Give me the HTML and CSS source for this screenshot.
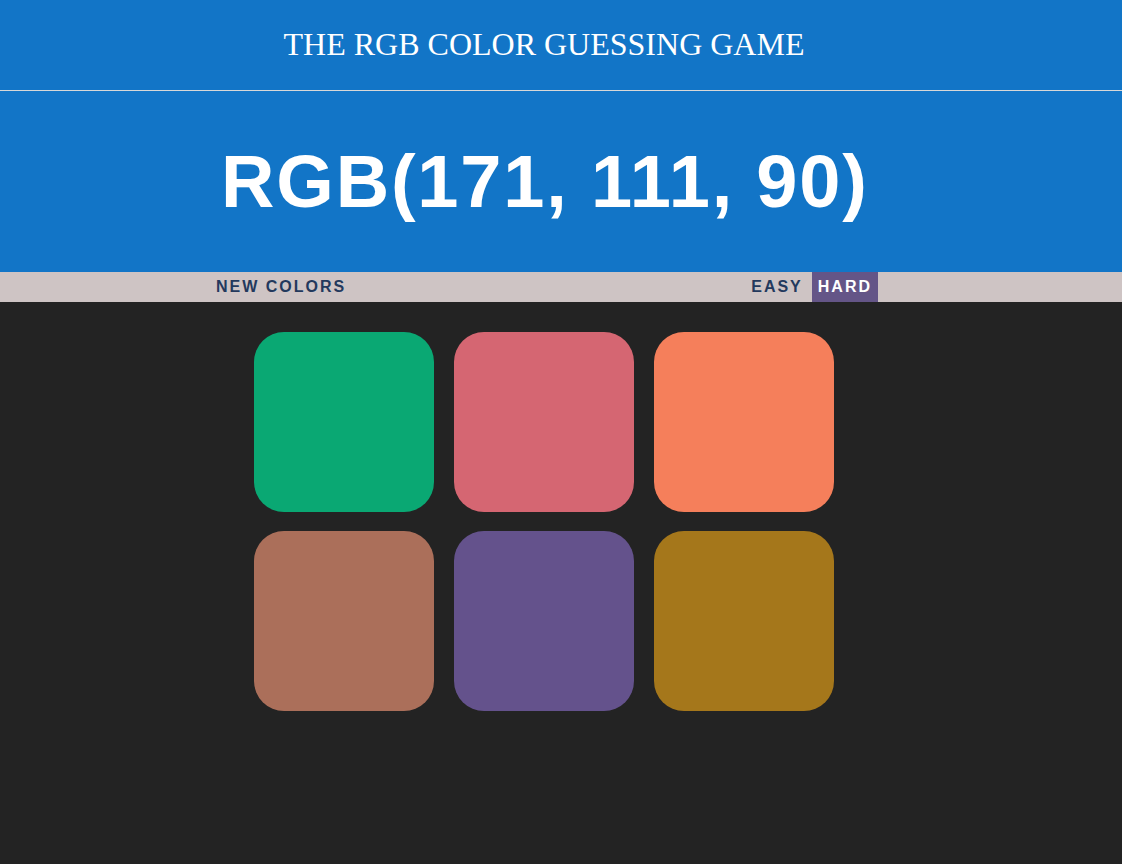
FILE: index.html
```html
<!DOCTYPE html>
<html lang="en">
<head>
<meta charset="utf-8">
<title>The RGB Color Guessing Game</title>
<link rel="stylesheet" href="styles.css">
</head>
<body>
  <header class="header">
    <div class="title-row">
      <h1 class="title">THE RGB COLOR GUESSING GAME</h1>
    </div>
    <div class="rgb-row">
      <h2 class="rgb">RGB(171, 111, 90)</h2>
    </div>
  </header>
  <nav class="stripe">
    <div class="stripe-inner">
      <button class="btn">NEW COLORS</button>
      <span class="spacer"></span>
      <button class="btn">EASY</button>
      <button class="btn selected">HARD</button>
    </div>
  </nav>
  <main class="board">
    <div class="grid">
      <div class="square sq1"></div>
      <div class="square sq2"></div>
      <div class="square sq3"></div>
      <div class="square sq4"></div>
      <div class="square sq5"></div>
      <div class="square sq6"></div>
    </div>
  </main>
</body>
</html>
```
FILE: styles.css
```css
html, body {
  margin: 0;
  padding: 0;
  height: 100%;
}
body {
  background: #232323;
  font-family: "Liberation Sans", Arial, sans-serif;
}
.header {
  background: #1275c7;
  color: #ffffff;
}
.title-row {
  height: 90px;
  border-bottom: 1px solid #d8d8d8;
  display: flex;
  justify-content: center;
  padding-right: 34px;
}
.title {
  margin: 0;
  padding-top: 28px;
  font-family: "Liberation Serif", "Times New Roman", serif;
  font-weight: normal;
  font-size: 32px;
  line-height: 32px;
}
.rgb-row {
  height: 181px;
  display: flex;
  justify-content: center;
  align-items: center;
  padding-right: 34px;
}
.rgb {
  margin: 0 -1.8px 0 0;
  font-family: "Liberation Sans", Arial, sans-serif;
  font-size: 74px;
  font-weight: bold;
  letter-spacing: 1.8px;
  line-height: 1;
}
.stripe {
  background: #cec4c4;
  height: 30px;
}
.stripe-inner {
  width: 662px;
  height: 30px;
  margin-left: 216px;
  display: flex;
  align-items: stretch;
}
.spacer {
  flex: 1;
}
.btn {
  border: none;
  background: transparent;
  color: #23395d;
  font-family: "Liberation Sans", Arial, sans-serif;
  font-weight: bold;
  font-size: 16px;
  letter-spacing: 2px;
  padding: 0;
  margin: 0;
  cursor: pointer;
}
.btn + .btn {
  margin-left: 9px;
}
.btn.selected {
  background: #645587;
  color: #ffffff;
  padding: 0 6px;
}
.board {
  display: flex;
  justify-content: center;
  padding: 30px 34px 0 0;
}
.grid {
  display: grid;
  grid-template-columns: repeat(3, 180px);
  grid-auto-rows: 180px;
  column-gap: 20px;
  row-gap: 19px;
}
.square {
  border-radius: 30px;
}
.sq1 { background: #0aa873; }
.sq2 { background: #d56672; }
.sq3 { background: #f57f5b; }
.sq4 { background: #ab6f5a; }
.sq5 { background: #64528c; }
.sq6 { background: #a5771b; }
```
